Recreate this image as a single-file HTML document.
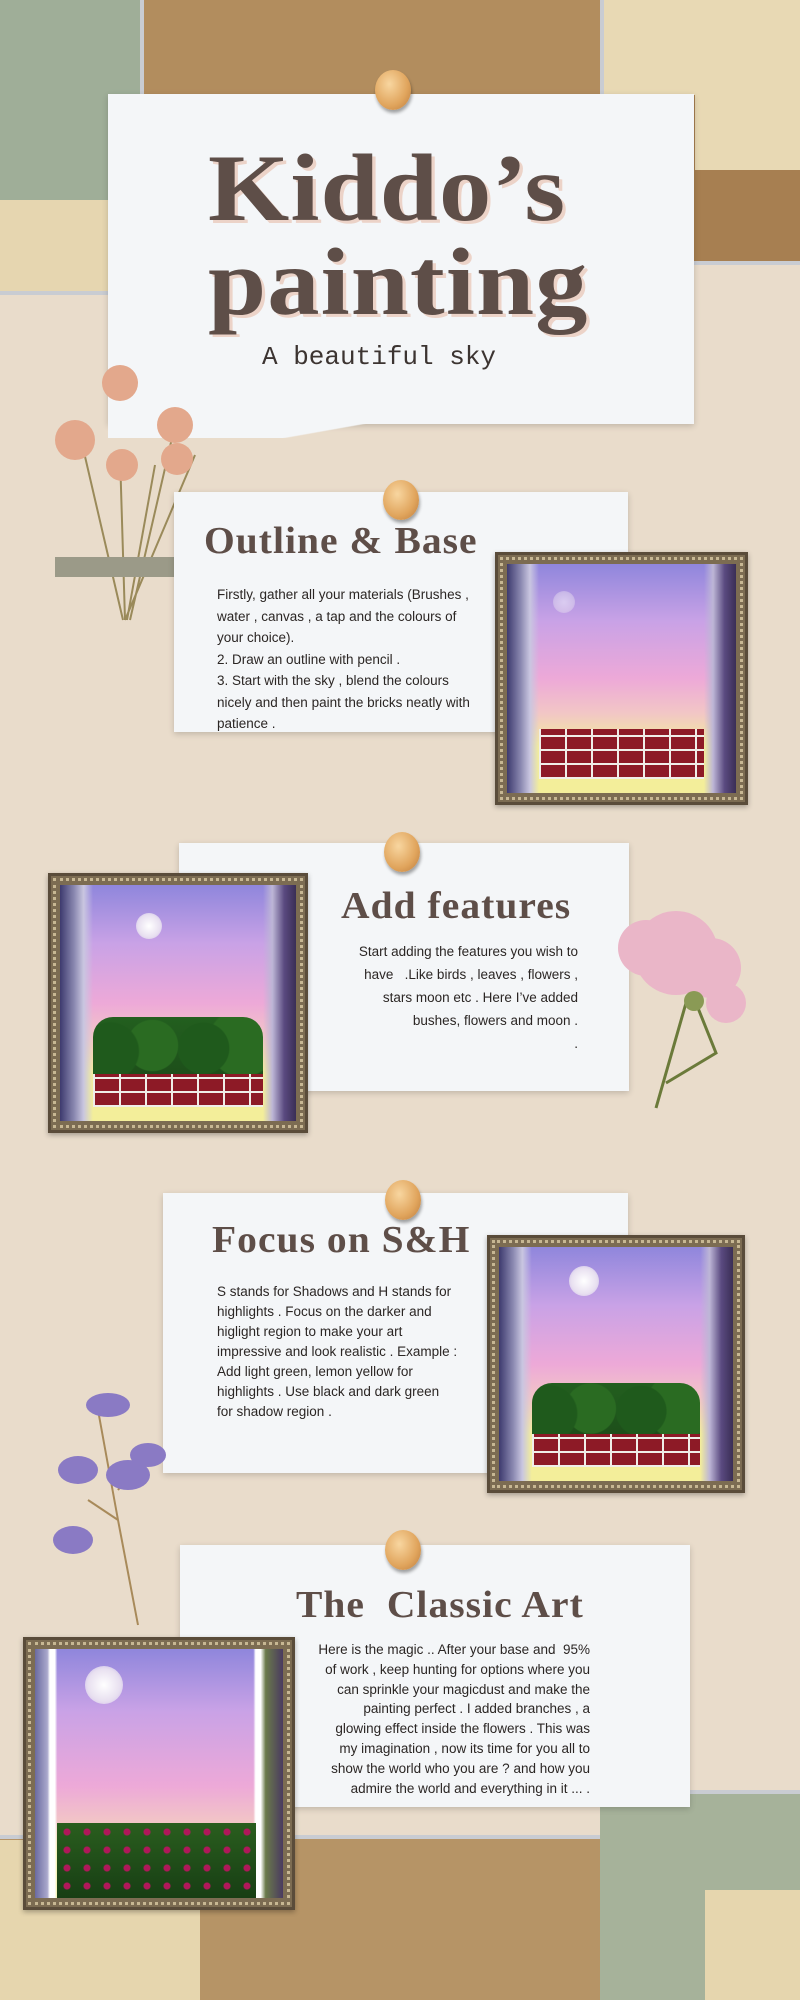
<!DOCTYPE html>
<html><head><meta charset="utf-8"><style>
*{margin:0;padding:0;box-sizing:border-box}
body{width:800px;height:2000px;position:relative;overflow:hidden;background:#e9dccb;font-family:"Liberation Sans",sans-serif}
.a{position:absolute}
.card{position:absolute;background:#f4f6f8;box-shadow:0 2px 6px rgba(0,0,0,.18)}
.pin{position:absolute;width:36px;height:40px;border-radius:50%;background:radial-gradient(ellipse at 40% 35%,#f8d6a0,#e0a45c 60%,#b9793a);box-shadow:1px 3px 3px rgba(0,0,0,.35)}
.tt{position:absolute;font-family:"Liberation Serif",serif;font-weight:bold;color:#5e4e48;text-shadow:3px 3px 0 #ecd3c8;white-space:nowrap;transform-origin:0 0;transform:scaleX(1.1);letter-spacing:1px}
.h{position:absolute;font-family:"Liberation Serif",serif;font-weight:bold;color:#5e4e48;font-size:38px;white-space:nowrap;letter-spacing:1px;transform-origin:0 0;transform:scaleX(1.04)}
.tx{position:absolute;font-size:13.5px;line-height:21px;color:#2b2624;white-space:nowrap}
.fr{position:absolute;background:#7c6c52;border:3px solid #5a4c3a;padding:9px;box-shadow:0 2px 5px rgba(0,0,0,.3)}
.fr:before{content:"";position:absolute;inset:2px;border:3px dotted #c7b793}
.pt{position:relative;width:100%;height:100%;background:linear-gradient(90deg,#3d3a6e 0,#8a88b0 6%,#c9c6e0 10%,transparent 14%,transparent 86%,#bdb6d6 90%,#5a4a80 95%,#3a2e55 100%),linear-gradient(180deg,#8f86dc 0,#c9a2e6 25%,#eda9d8 50%,#f2c6c6 65%,#f3ee9a 80%,#f3ee9a 100%);overflow:hidden}
.br{position:absolute;left:14%;right:14%;bottom:6%;height:22%;background:repeating-linear-gradient(0deg,#f0eee8 0 2px,transparent 2px 14px),repeating-linear-gradient(90deg,#f0eee8 0 2px,#8d1a26 2px 26px)}
.bu{position:absolute;left:14%;right:14%;background:radial-gradient(circle at 10% 60%,#1f5a1c 18%,transparent 19%),radial-gradient(circle at 35% 50%,#2a6b22 22%,transparent 23%),radial-gradient(circle at 65% 55%,#1f5a1c 22%,transparent 23%),radial-gradient(circle at 88% 45%,#2a6b22 22%,transparent 23%),linear-gradient(#235f1f,#1d4f1a)}
.moon{position:absolute;border-radius:50%;background:radial-gradient(#fff,#e8e0f0 60%,rgba(255,255,255,.2))}
</style></head><body>
<!-- top collage -->
<div class="a" style="left:0;top:0;width:150px;height:210px;background:#9fae98"></div>
<div class="a" style="left:0;top:200px;width:115px;height:95px;background:#e6d6b0;border-bottom:4px solid #c9ccd2"></div>
<div class="a" style="left:140px;top:0;width:470px;height:95px;background:#b28d5e;border-left:4px solid #c9ccd2"></div>
<div class="a" style="left:600px;top:0;width:200px;height:185px;background:#e8d9b4;border-left:4px solid #c9ccd2"></div>
<div class="a" style="left:690px;top:170px;width:110px;height:95px;background:#a77f51;border-bottom:4px solid #c9ccd2"></div>
<div class="a" style="left:600px;top:95px;width:95px;height:90px;background:#a77f51"></div>
<!-- bottom collage -->
<div class="a" style="left:0;top:1835px;width:800px;height:165px;background:#b69466;border-top:4px solid #c9ccd2"></div>
<div class="a" style="left:0;top:1840px;width:200px;height:160px;background:#e6d6ae"></div>
<div class="a" style="left:600px;top:1790px;width:200px;height:210px;background:#a6b29a;border-top:4px solid #c9ccd2"></div>
<div class="a" style="left:705px;top:1890px;width:95px;height:110px;background:#e6d6ae"></div>

<!-- header -->
<div class="card" style="left:108px;top:94px;width:586px;height:330px"></div>
<div class="a" style="left:108px;top:420px;width:586px;height:18px;background:linear-gradient(170deg,#f4f6f8 40%,transparent 41%)"></div>
<div class="pin" style="left:375px;top:70px"></div>
<div class="tt" style="left:208px;top:138px;font-size:95px;line-height:100px">Kiddo’s</div>
<div class="tt" style="left:208px;top:232px;font-size:95px;line-height:100px">painting</div>
<div class="a" style="left:262px;top:342px;font-family:'Liberation Mono',monospace;font-size:26px;color:#3c3431">A beautiful sky</div>
<!-- dried flowers -->
<svg class="a" style="left:45px;top:365px" width="170" height="260"><g stroke="#9a8a5a" stroke-width="2" fill="none"><path d="M80 255 L75 90 M82 255 L110 100 M85 255 L130 60 M78 255 L35 70 M80 255 L150 90"/></g><g fill="#e3a88c"><circle cx="75" cy="18" r="18"/><circle cx="30" cy="75" r="20"/><circle cx="77" cy="100" r="16"/><circle cx="130" cy="60" r="18"/><circle cx="132" cy="94" r="16"/></g><rect x="10" y="192" width="120" height="20" fill="#9b9a88"/></svg>

<!-- section 1 -->
<div class="card" style="left:174px;top:492px;width:454px;height:240px"></div>
<div class="pin" style="left:383px;top:480px"></div>
<div class="h" style="left:204px;top:519px">Outline &amp; Base</div>
<div class="tx" style="left:217px;top:584px;line-height:21.5px">Firstly, gather all your materials (Brushes ,<br>water , canvas , a tap and the colours of<br>your choice).<br>2. Draw an outline with pencil .<br>3. Start with the sky , blend the colours<br>nicely and then paint the bricks neatly with<br>patience .</div>
<div class="fr" style="left:495px;top:552px;width:253px;height:253px"><div class="pt"><div class="moon" style="left:20%;top:12%;width:22px;height:22px;opacity:.5"></div><div class="br"></div></div></div>

<!-- section 2 -->
<div class="card" style="left:179px;top:843px;width:450px;height:248px"></div>
<div class="pin" style="left:384px;top:832px"></div>
<div class="fr" style="left:48px;top:873px;width:260px;height:260px"><div class="pt"><div class="moon" style="left:32%;top:12%;width:26px;height:26px"></div><div class="br"></div><div class="bu" style="top:56%;height:24%;border-radius:20px 20px 0 0"></div></div></div>
<div class="h" style="left:341px;top:884px">Add features</div>
<div class="tx" style="left:278px;top:940px;width:300px;text-align:right;line-height:23px">Start adding the features you wish to<br>have &nbsp;&nbsp;.Like birds , leaves , flowers ,<br>stars moon etc . Here I’ve added<br>bushes, flowers and moon .<br>.</div>
<svg class="a" style="left:606px;top:893px" width="150" height="220"><g fill="#eab6c8"><circle cx="70" cy="60" r="42"/><circle cx="40" cy="55" r="28"/><circle cx="105" cy="75" r="30"/><circle cx="120" cy="110" r="20"/></g><path d="M80 110 L50 215 M90 110 L110 160 L60 190" stroke="#6b7a3a" stroke-width="3" fill="none"/><circle cx="88" cy="108" r="10" fill="#8a9a55"/></svg>

<!-- section 3 -->
<div class="card" style="left:163px;top:1193px;width:465px;height:280px"></div>
<div class="pin" style="left:385px;top:1180px"></div>
<div class="h" style="left:212px;top:1218px">Focus on S&amp;H</div>
<div class="tx" style="left:217px;top:1282px;line-height:20px">S stands for Shadows and H stands for<br>highlights . Focus on the darker and<br>higlight region to make your art<br>impressive and look realistic . Example :<br>Add light green, lemon yellow for<br>highlights . Use black and dark green<br>for shadow region .</div>
<div class="fr" style="left:487px;top:1235px;width:258px;height:258px"><div class="pt"><div class="moon" style="left:30%;top:8%;width:30px;height:30px"></div><div class="br"></div><div class="bu" style="top:58%;height:22%;border-radius:20px 20px 0 0"></div></div></div>
<svg class="a" style="left:48px;top:1370px" width="130" height="260"><path d="M90 255 L70 150 L50 40 M70 150 L40 130 M70 120 L100 80" stroke="#a88a5a" stroke-width="2" fill="none"/><g fill="#8a7ac4"><ellipse cx="60" cy="35" rx="22" ry="12"/><ellipse cx="30" cy="100" rx="20" ry="14"/><ellipse cx="80" cy="105" rx="22" ry="15"/><ellipse cx="25" cy="170" rx="20" ry="14"/><ellipse cx="100" cy="85" rx="18" ry="12"/></g></svg>

<!-- section 4 -->
<div class="card" style="left:180px;top:1545px;width:510px;height:262px"></div>
<div class="pin" style="left:385px;top:1530px"></div>
<div class="h" style="left:296px;top:1583px">The &nbsp;Classic Art</div>
<div class="tx" style="left:290px;top:1640px;width:300px;text-align:right;line-height:19.8px">Here is the magic .. After your base and &nbsp;95%<br>of work , keep hunting for options where you<br>can sprinkle your magicdust and make the<br>painting perfect . I added branches , a<br>glowing effect inside the flowers . This was<br>my imagination , now its time for you all to<br>show the world who you are ? and how you<br>admire the world and everything in it ... .</div>
<div class="fr" style="left:23px;top:1637px;width:272px;height:273px"><div class="pt" style="background:linear-gradient(90deg,#6a6aa0 0,#aaa8cc 5%,#fff 6%,#fff 8%,transparent 9%,transparent 88%,#fff 89%,#fff 91%,#6a7a4a 93%,#4a3a60 100%),linear-gradient(180deg,#8f86dc 0,#c9a2e6 25%,#eda9d8 55%,#f2c6c6 70%,#f3ee9a 82%)"><div class="moon" style="left:20%;top:7%;width:38px;height:38px"></div><div class="bu" style="left:9%;right:11%;top:70%;height:30%;background:radial-gradient(circle,#b0185a 3px,transparent 4px) 0 0/20px 18px,linear-gradient(#2a5e1e,#173e14)"></div></div></div>
</body></html>
